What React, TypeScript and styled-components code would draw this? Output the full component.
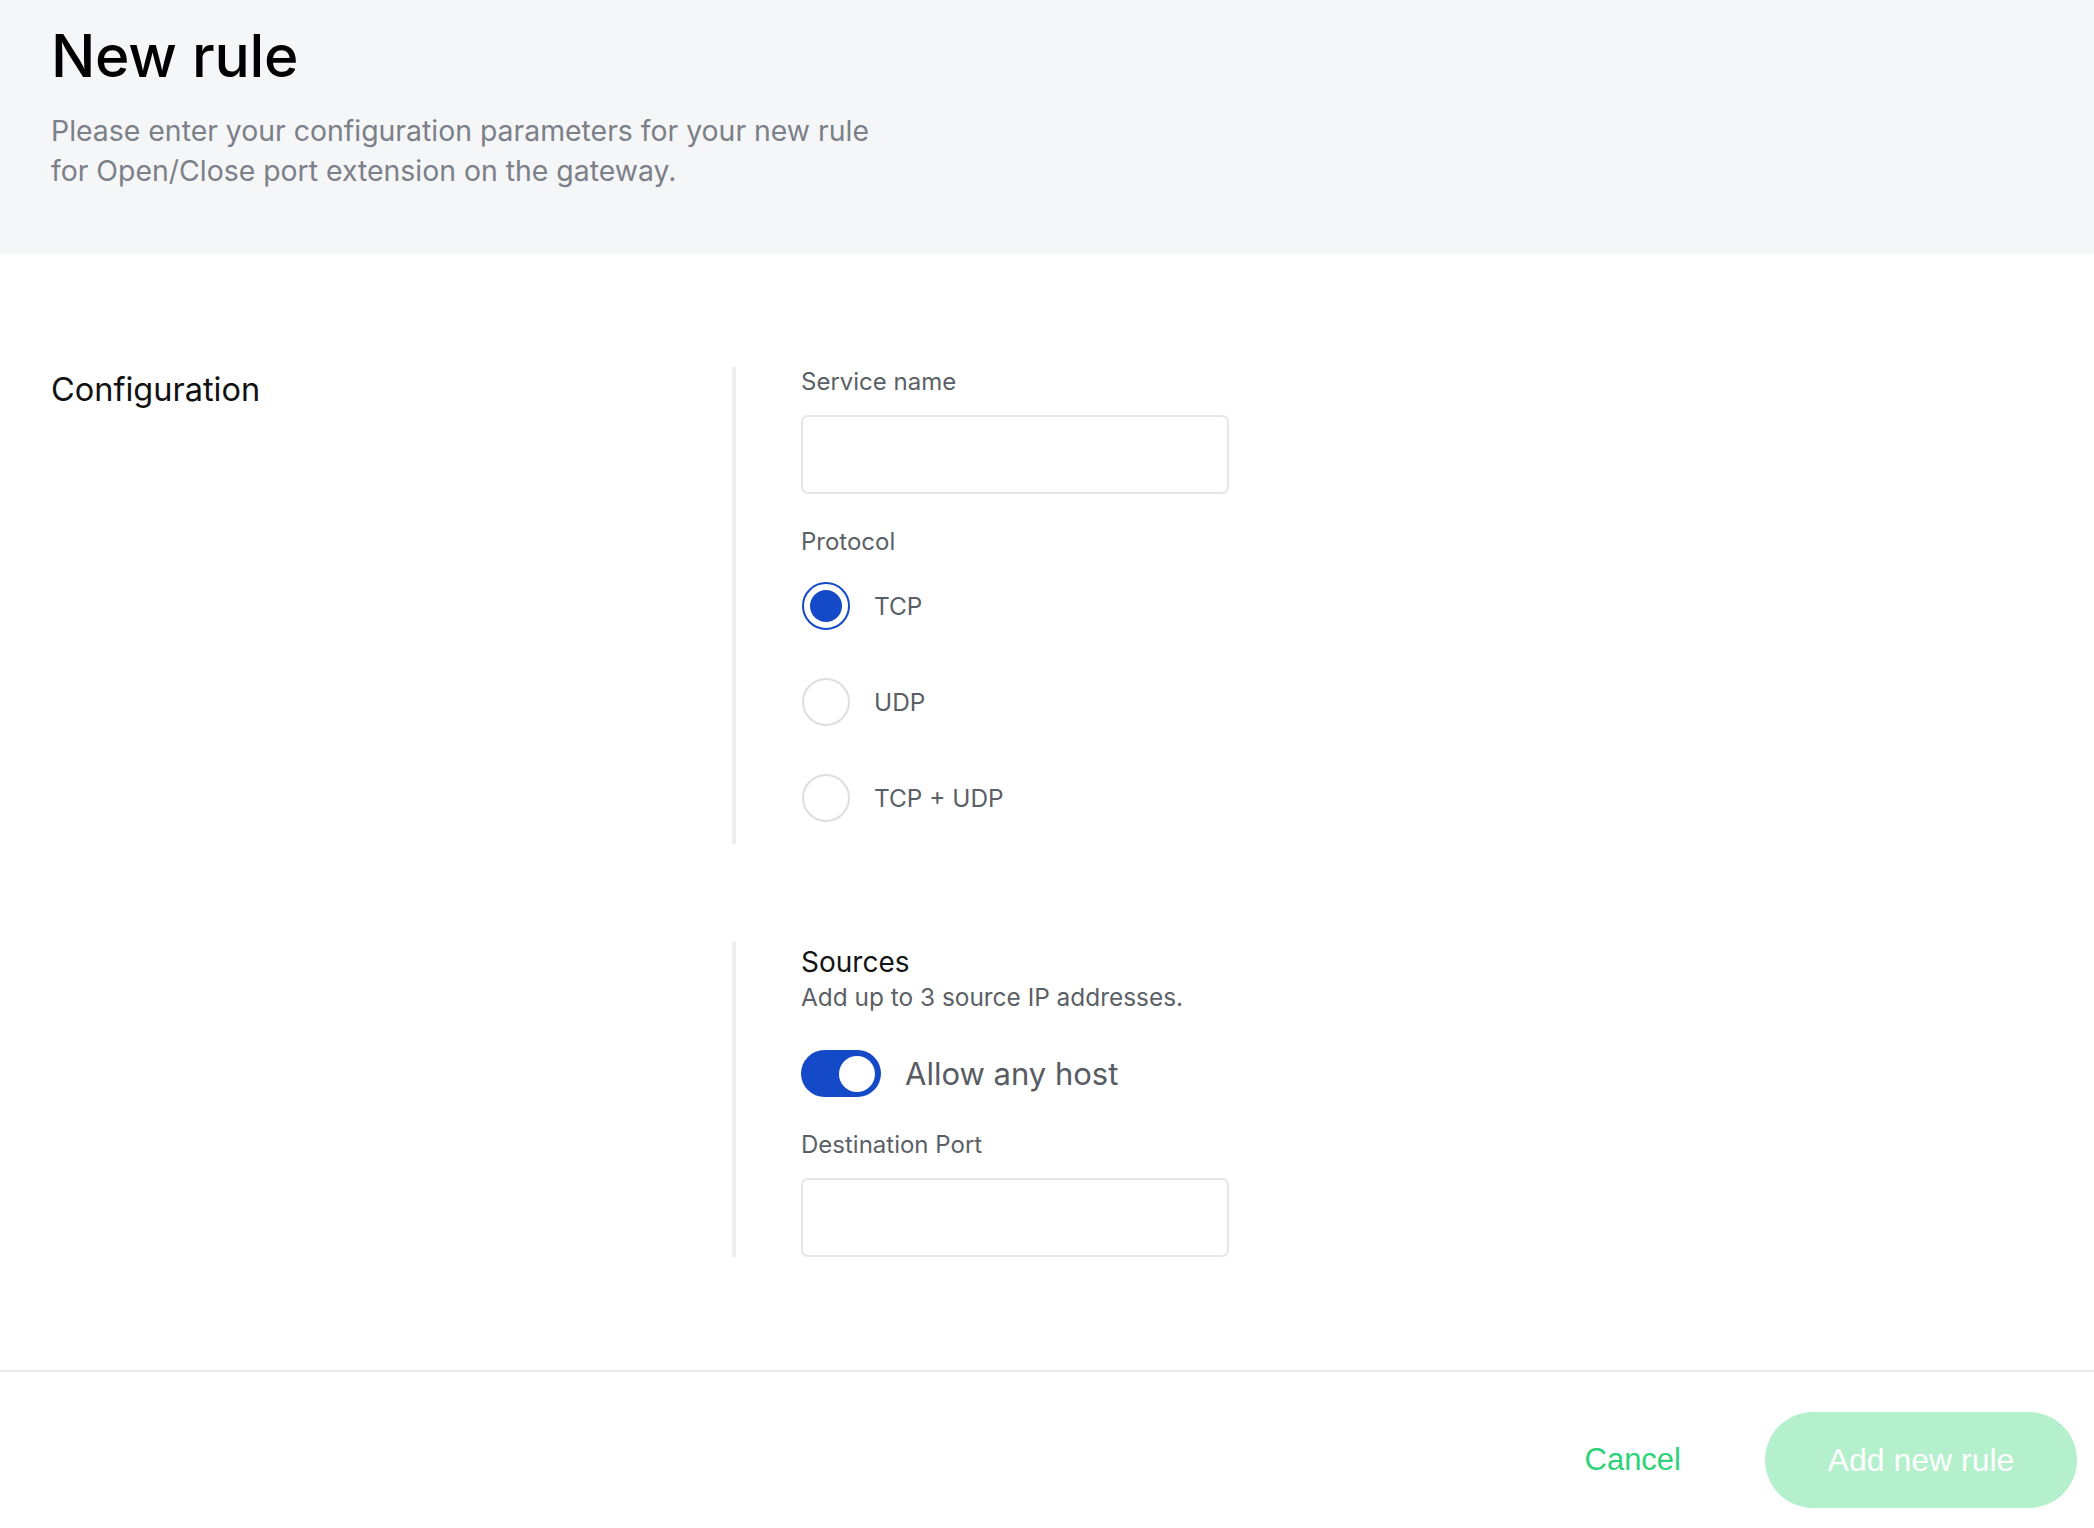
import { useState } from 'react'
import styled, { createGlobalStyle } from 'styled-components'

const GlobalStyle = createGlobalStyle`
  body {
    margin: 0;
    background: #ffffff;
    font-family: Inter, "Noto Sans", sans-serif;
  }
`

const Page = styled.div`
  display: flex;
  flex-direction: column;
  min-height: 1528px;
`

const Header = styled.header`
  background: #f5f6f8;
  height: 254px;
  box-sizing: border-box;
  padding: 18px 51px 0;
`

const Title = styled.h1`
  margin: 0;
  font-size: 58.7px;
  line-height: 76px;
  font-weight: 500;
  color: #000;
  letter-spacing: -0.3px;
`

const Subtitle = styled.p`
  margin: 17px 0 0;
  font-size: 28.4px;
  line-height: 40px;
  color: #7c8088;
  max-width: 850px;
`

const Main = styled.main`
  display: grid;
  grid-template-columns: 732px 1fr;
  padding: 113px 0 113px;
  border-bottom: 2px solid #e8e8e8;
`

const SideTitle = styled.h2`
  margin: 0;
  padding: 0 0 0 51px;
  font-size: 32.5px;
  line-height: 46px;
  font-weight: 400;
  color: #111;
`

const Sections = styled.div`
  display: flex;
  flex-direction: column;
  gap: 98px;
`

const Section = styled.section<{ $bottom?: number }>`
  border-left: 4px solid #ededed;
  padding: 0 0 ${(p) => p.$bottom ?? 0}px 65px;
  display: flex;
  flex-direction: column;
`

const Label = styled.label<{ $gap?: number }>`
  font-size: 24px;
  line-height: 30px;
  color: #5b5f66;
  margin-top: ${(p) => p.$gap ?? 0}px;
`

const TextInput = styled.input`
  width: 428px;
  height: 79px;
  box-sizing: border-box;
  margin-top: 18px;
  border: 2px solid #e6e6e6;
  border-radius: 7px;
  background: #fff;
  font: inherit;
  font-size: 24px;
  padding: 0 18px;
  outline: none;
`

const RadioList = styled.div`
  display: flex;
  flex-direction: column;
  gap: 48px;
  margin-top: 25px;
`

const RadioRow = styled.label`
  display: flex;
  align-items: center;
  gap: 24px;
  height: 48px;
  padding-left: 1px;
  cursor: pointer;
  font-size: 24.4px;
  color: #5b5f66;
`

const RadioCircle = styled.span<{ $checked: boolean }>`
  width: 48px;
  height: 48px;
  box-sizing: border-box;
  border-radius: 50%;
  border: 2px solid ${(p) => (p.$checked ? '#1449c8' : '#dedede')};
  display: flex;
  align-items: center;
  justify-content: center;
  flex-shrink: 0;

  &::after {
    content: '';
    width: 32px;
    height: 32px;
    border-radius: 50%;
    background: ${(p) => (p.$checked ? '#1449c8' : 'transparent')};
  }
`

const SectionHeading = styled.h3`
  margin: 0;
  font-size: 28px;
  line-height: 40px;
  font-weight: 400;
  color: #151515;
`

const Hint = styled.p`
  margin: 0;
  font-size: 24.4px;
  line-height: 30px;
  color: #5b5f66;
`

const ToggleRow = styled.label`
  display: flex;
  align-items: center;
  gap: 24px;
  margin-top: 38px;
  cursor: pointer;
`

const Toggle = styled.span<{ $on: boolean }>`
  width: 80px;
  height: 47px;
  border-radius: 24px;
  background: ${(p) => (p.$on ? '#1449c8' : '#d5d7dc')};
  display: flex;
  align-items: center;
  justify-content: ${(p) => (p.$on ? 'flex-end' : 'flex-start')};
  padding: 0 6px;
  box-sizing: border-box;

  &::after {
    content: '';
    width: 36px;
    height: 36px;
    border-radius: 50%;
    background: #fff;
  }
`

const ToggleText = styled.span`
  font-size: 31px;
  color: #575b62;
`

const Footer = styled.footer`
  display: flex;
  justify-content: flex-end;
  align-items: center;
  gap: 84px;
  padding: 40px 17px 0 0;
`

const TextButton = styled.button`
  border: none;
  background: none;
  padding: 0;
  font-family: "Liberation Sans", Arial, sans-serif;
  font-size: 31px;
  color: #2fd27a;
  cursor: pointer;
`

const PrimaryButton = styled.button`
  width: 312px;
  height: 96px;
  border: none;
  border-radius: 48px;
  background: #b3f0cb;
  color: #fff;
  font-family: "Liberation Sans", Arial, sans-serif;
  font-size: 32px;
  cursor: pointer;
`

const protocols = ['TCP', 'UDP', 'TCP + UDP']

function App() {
  const [protocol, setProtocol] = useState('TCP')
  const [anyHost, setAnyHost] = useState(true)

  return (
    <Page>
      <GlobalStyle />
      <Header>
        <Title>New rule</Title>
        <Subtitle>
          Please enter your configuration parameters for your new rule for Open/Close port
          extension on the gateway.
        </Subtitle>
      </Header>

      <Main>
        <SideTitle>Configuration</SideTitle>
        <Sections>
          <Section $bottom={22}>
            <Label>Service name</Label>
            <TextInput />
            <Label $gap={33}>Protocol</Label>
            <RadioList>
              {protocols.map((p) => (
                <RadioRow key={p} onClick={() => setProtocol(p)}>
                  <RadioCircle $checked={protocol === p} />
                  {p}
                </RadioRow>
              ))}
            </RadioList>
          </Section>

          <Section>
            <SectionHeading>Sources</SectionHeading>
            <Hint>Add up to 3 source IP addresses.</Hint>
            <ToggleRow onClick={() => setAnyHost(!anyHost)}>
              <Toggle $on={anyHost} />
              <ToggleText>Allow any host</ToggleText>
            </ToggleRow>
            <Label $gap={33}>Destination Port</Label>
            <TextInput />
          </Section>
        </Sections>
      </Main>

      <Footer>
        <TextButton>Cancel</TextButton>
        <PrimaryButton>Add new rule</PrimaryButton>
      </Footer>
    </Page>
  )
}

export default App
